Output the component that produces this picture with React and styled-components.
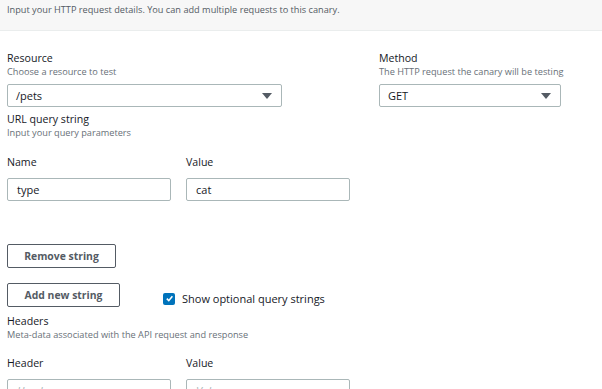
import styled, { createGlobalStyle } from "styled-components";

const Global = createGlobalStyle`
  body {
    margin: 0;
    background: #ffffff;
    font-family: "Open Sans", "Liberation Sans", sans-serif;
    color: #16191f;
  }
`;

const Page = styled.div`
  width: 602px;
  height: 389px;
  overflow: hidden;
`;

const Banner = styled.div`
  background: #f7f7f7;
  border-bottom: 1px solid #eaeded;
  height: 31px;
  padding: 0 7px 14px;
  display: flex;
  align-items: flex-end;
  box-sizing: border-box;
  font-size: 9.2px;
  color: #545b64;
`;

const Body = styled.div`
  padding: 21px 7px 0;
`;

const TopRow = styled.div`
  display: flex;
  gap: 97px;
`;

const Field = styled.div`
  display: flex;
  flex-direction: column;
  width: ${(p) => p.width}px;
`;

const Label = styled.div`
  font-size: 10.6px;
  line-height: 13px;
  color: #16191f;
  white-space: nowrap;
`;

const Hint = styled.div`
  font-size: 9.2px;
  line-height: 12px;
  color: #687078;
  margin-top: 1px;
  white-space: nowrap;
`;

const SelectBox = styled.div`
  margin-top: 6px;
  height: 23px;
  box-sizing: border-box;
  border: 1px solid #aab7b8;
  border-radius: 2px;
  display: flex;
  align-items: center;
  justify-content: space-between;
  padding: 0 9px 0 8px;
  font-size: 11px;
  color: #16191f;
`;

const Caret = styled.span`
  width: 0;
  height: 0;
  border-left: 5px solid transparent;
  border-right: 5px solid transparent;
  border-top: 6px solid #545b64;
`;

const Section = styled.div`
  margin-top: ${(p) => p.top || 0}px;
`;

const PairRow = styled.div`
  display: flex;
  gap: 15px;
  margin-top: ${(p) => p.top || 0}px;
`;

const Input = styled.div`
  margin-top: 9px;
  width: 164px;
  height: 23px;
  box-sizing: border-box;
  border: 1px solid #aab7b8;
  border-radius: 2px;
  display: flex;
  align-items: center;
  padding: 0 9px;
  font-size: 11px;
  color: ${(p) => (p.placeholder ? "#aab7b8" : "#16191f")};
  font-style: ${(p) => (p.placeholder ? "italic" : "normal")};
`;

const Button = styled.button`
  height: 24px;
  width: ${(p) => p.width}px;
  box-sizing: border-box;
  border: 1px solid #545b64;
  border-radius: 2px;
  background: #ffffff;
  font-family: inherit;
  font-size: 10.4px;
  font-weight: 700;
  color: #545b64;
  padding: 0;
  margin-top: ${(p) => p.top || 0}px;
`;

const ActionRow = styled.div`
  display: flex;
  align-items: center;
  gap: 43px;
  margin-top: 15px;
`;

const Check = styled.label`
  display: flex;
  align-items: center;
  gap: 7px;
  font-size: 11px;
  color: #16191f;
  margin-top: 7px;
`;

const Box = styled.span`
  width: 12px;
  height: 12px;
  border-radius: 2px;
  background: #0073bb;
  display: flex;
  align-items: center;
  justify-content: center;
`;

const App = () => {
  return (
    <Page>
      <Global />
      <Banner>
        Input your HTTP request details. You can add multiple requests to this canary.
      </Banner>
      <Body>
        <TopRow>
          <Field width={275}>
            <Label>Resource</Label>
            <Hint>Choose a resource to test</Hint>
            <SelectBox>
              /pets
              <Caret />
            </SelectBox>
          </Field>
          <Field width={182}>
            <Label>Method</Label>
            <Hint>The HTTP request the canary will be testing</Hint>
            <SelectBox>
              GET
              <Caret />
            </SelectBox>
          </Field>
        </TopRow>
        <Section top={6}>
          <Label>URL query string</Label>
          <Hint>Input your query parameters</Hint>
        </Section>
        <PairRow top={17}>
          <Field>
            <Label>Name</Label>
            <Input>type</Input>
          </Field>
          <Field>
            <Label>Value</Label>
            <Input>cat</Input>
          </Field>
        </PairRow>
        <Button width={109} top={43}>
          Remove string
        </Button>
        <ActionRow>
          <Button width={113}>Add new string</Button>
          <Check>
            <Box>
              <svg width="9" height="9" viewBox="0 0 10 10">
                <path
                  d="M2 5.2 L4.2 7.4 L8.2 2.6"
                  fill="none"
                  stroke="#fff"
                  strokeWidth="1.8"
                />
              </svg>
            </Box>
            Show optional query strings
          </Check>
        </ActionRow>
        <Section top={8}>
          <Label>Headers</Label>
          <Hint>Meta-data associated with the API request and response</Hint>
        </Section>
        <PairRow top={16}>
          <Field>
            <Label>Header</Label>
            <Input placeholder>Header</Input>
          </Field>
          <Field>
            <Label>Value</Label>
            <Input placeholder>Value</Input>
          </Field>
        </PairRow>
      </Body>
    </Page>
  );
};

export default App;
